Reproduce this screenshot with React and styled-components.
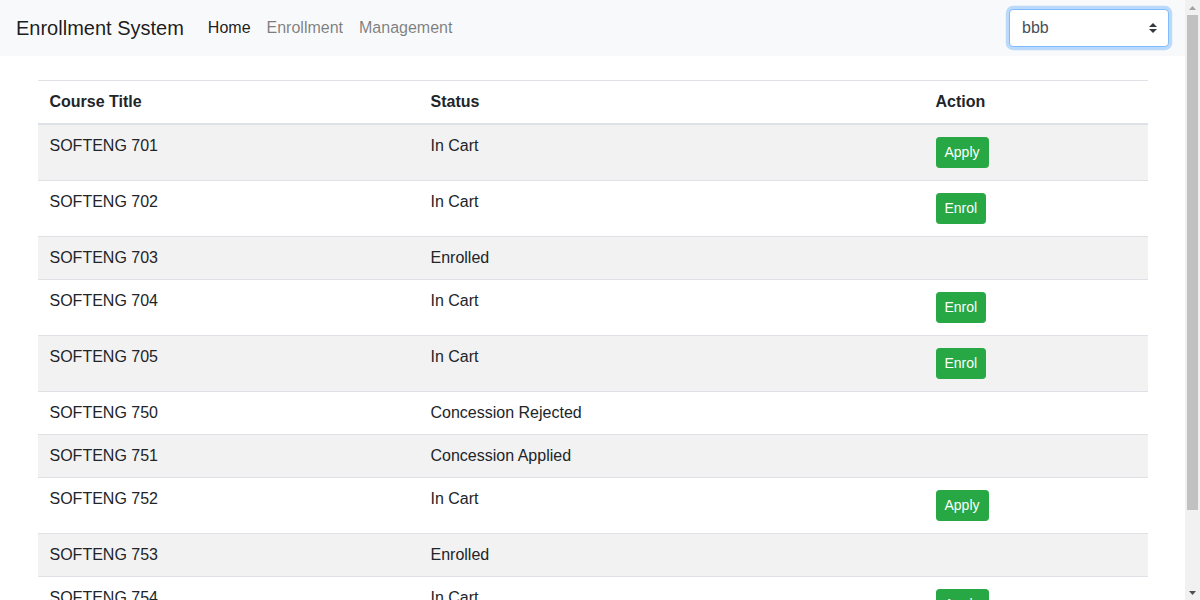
import React from "react";
import styled, { createGlobalStyle } from "styled-components";

const GlobalStyle = createGlobalStyle`
  html, body { margin: 0; padding: 0; overflow: hidden; }
  body {
    font-family: "Liberation Sans", Arial, sans-serif;
    font-size: 16px;
    line-height: 1.5;
    color: #212529;
    background: #fff;
  }
  * { box-sizing: border-box; }
`;

const Screen = styled.div`
  display: flex;
  height: 100vh;
`;

const Page = styled.div`
  flex: 1;
  min-width: 0;
  overflow: hidden;
`;

const Scrollbar = styled.div`
  width: 15px;
  flex: none;
  display: flex;
  flex-direction: column;
  background: #f1f1f1;
`;

const ScrollArrow = styled.div`
  height: 15px;
  display: flex;
  align-items: center;
  justify-content: center;
`;

const Track = styled.div`
  flex: 1;
  padding: 0 2px;
`;

const Thumb = styled.div`
  height: 495px;
  background: #c1c1c1;
`;

const Navbar = styled.nav`
  display: flex;
  align-items: center;
  padding: 8px 16px;
  background: #f8f9fa;
`;

const Brand = styled.span`
  font-size: 20px;
  line-height: 30px;
  padding: 5px 0;
  margin-right: 16px;
  color: rgba(0, 0, 0, 0.9);
  white-space: nowrap;
`;

const NavList = styled.div`
  display: flex;
  align-items: center;
`;

const NavLink = styled.a`
  padding: 8px;
  font-size: 16px;
  line-height: 24px;
  color: ${(p) => (p.$active ? "rgba(0, 0, 0, 0.9)" : "rgba(0, 0, 0, 0.5)")};
  text-decoration: none;
  cursor: pointer;
`;

const SelectWrap = styled.div`
  position: relative;
  margin-left: auto;
  width: 160px;
`;

const Select = styled.div`
  height: 38px;
  width: 100%;
  padding: 6px 28px 6px 12px;
  font-size: 16px;
  line-height: 24px;
  color: #495057;
  background: #fff;
  border: 1px solid #80bdff;
  border-radius: 4px;
  box-shadow: 0 0 0 3.2px rgba(0, 123, 255, 0.25);
`;

const Arrow = styled.svg`
  position: absolute;
  right: 12px;
  top: 14px;
  width: 8px;
  height: 10px;
`;

const Container = styled.main`
  max-width: 1140px;
  margin: 24px auto 0;
  padding: 0 15px;
`;

const Table = styled.table`
  width: 100%;
  border-collapse: collapse;
  margin-bottom: 16px;
  color: #212529;
  line-height: 18px;
`;

const Th = styled.th`
  text-align: left;
  font-weight: bold;
  padding: 12px;
  border-top: 1px solid #dee2e6;
  border-bottom: 2px solid #dee2e6;
  vertical-align: bottom;
  width: ${(p) => p.$w || "auto"};
`;

const Tr = styled.tr`
  background: ${(p) => (p.$striped ? "rgba(0, 0, 0, 0.05)" : "transparent")};
`;

const Td = styled.td`
  padding: 12px;
  border-top: 1px solid #dee2e6;
  vertical-align: top;
`;

const Button = styled.button`
  display: inline-block;
  vertical-align: top;
  font-family: inherit;
  font-size: 14px;
  line-height: 21px;
  padding: 4px 8px;
  color: #fff;
  background: #28a745;
  border: 1px solid #28a745;
  border-radius: 3.2px;
  cursor: pointer;
`;

const rows = [
  ["SOFTENG 701", "In Cart", "Apply"],
  ["SOFTENG 702", "In Cart", "Enrol"],
  ["SOFTENG 703", "Enrolled", null],
  ["SOFTENG 704", "In Cart", "Enrol"],
  ["SOFTENG 705", "In Cart", "Enrol"],
  ["SOFTENG 750", "Concession Rejected", null],
  ["SOFTENG 751", "Concession Applied", null],
  ["SOFTENG 752", "In Cart", "Apply"],
  ["SOFTENG 753", "Enrolled", null],
  ["SOFTENG 754", "In Cart", "Apply"],
  ["SOFTENG 755", "Enrolled", null],
];

export default function App() {
  return (
    <Screen>
      <GlobalStyle />
      <Page>
        <Navbar>
          <Brand>Enrollment System</Brand>
          <NavList>
            <NavLink $active>Home</NavLink>
            <NavLink>Enrollment</NavLink>
            <NavLink>Management</NavLink>
          </NavList>
          <SelectWrap>
            <Select>bbb</Select>
            <Arrow viewBox="0 0 4 5">
              <path d="M2 0L0 2h4zm0 5L0 3h4z" fill="#343a40" />
            </Arrow>
          </SelectWrap>
        </Navbar>
        <Container>
          <Table>
            <thead>
              <tr>
                <Th $w="381px">Course Title</Th>
                <Th $w="505px">Status</Th>
                <Th>Action</Th>
              </tr>
            </thead>
            <tbody>
              {rows.map(([title, status, action], i) => (
                <Tr key={title} $striped={i % 2 === 0}>
                  <Td>{title}</Td>
                  <Td>{status}</Td>
                  <Td>{action && <Button>{action}</Button>}</Td>
                </Tr>
              ))}
            </tbody>
          </Table>
        </Container>
      </Page>
      <Scrollbar>
        <ScrollArrow>
          <svg width="7" height="4" viewBox="0 0 7 4">
            <path d="M3.5 0L7 4H0z" fill="#a3a3a3" />
          </svg>
        </ScrollArrow>
        <Track>
          <Thumb />
        </Track>
        <ScrollArrow>
          <svg width="7" height="4" viewBox="0 0 7 4">
            <path d="M0 0h7L3.5 4z" fill="#505050" />
          </svg>
        </ScrollArrow>
      </Scrollbar>
    </Screen>
  );
}
